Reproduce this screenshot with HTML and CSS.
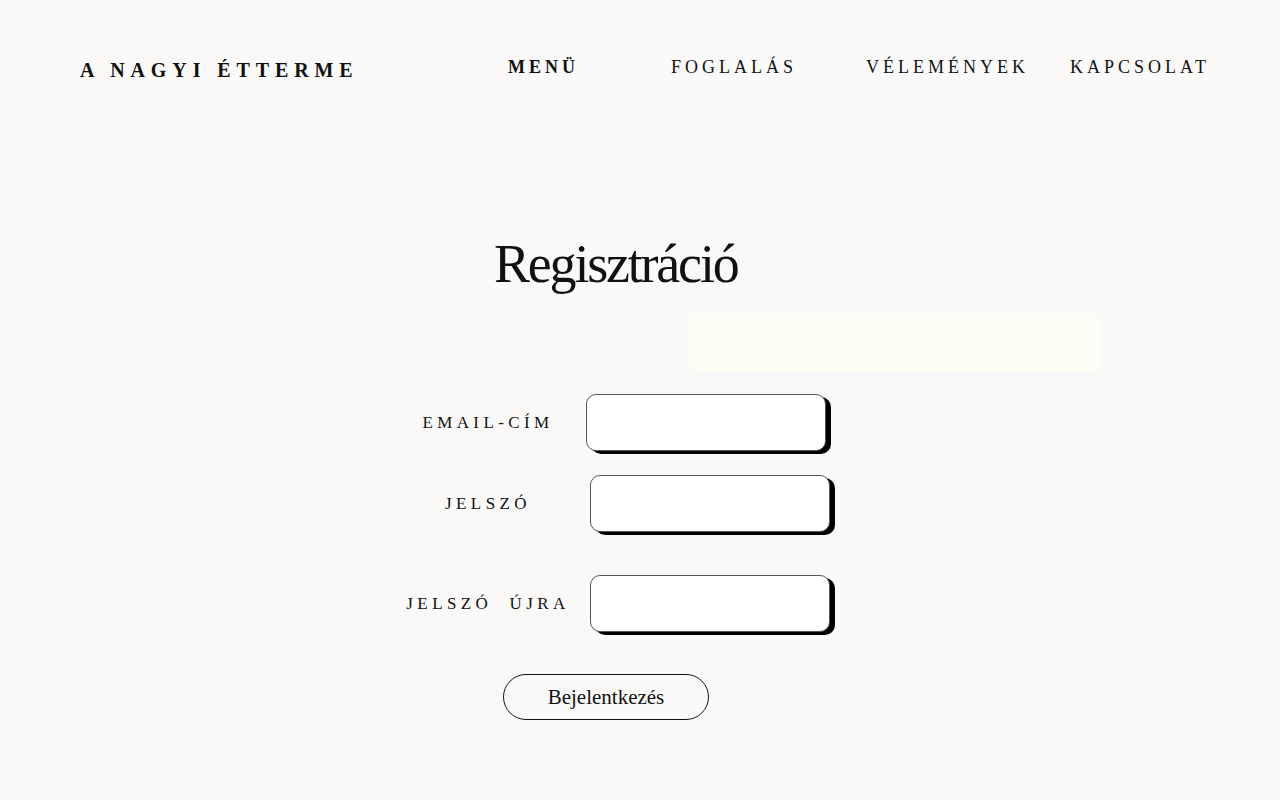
FILE: index.html
```html
<!DOCTYPE html>
<html lang="hu">
<head>
    <meta charset="UTF-8">
    <meta name="viewport" content="width=device-width, initial-scale=1.0">
    <title>Regisztráció - A Nagyi Étterme</title>
    <link rel="stylesheet" href="styles.css">
</head>
<body>
    <header>
        <div class="logo">A NAGYI ÉTTERME</div>
        <nav>
            <a href="#" class="active">MENÜ</a>
            <a href="#">FOGLALA&#769;S</a>
            <a href="#">VE&#769;LEME&#769;NYEK</a>
            <a href="#">KAPCSOLAT</a>
        </nav>
    </header>
    <main>
        <h1>Regisztráció</h1>
        <div class="message"></div>
        <form action="#" method="post">
            <div class="form-row">
                <label for="email">EMAIL-CI&#769;M</label>
                <input type="email" id="email" name="email">
            </div>
            <div class="form-row shifted">
                <label for="password">JELSZÓ</label>
                <input type="password" id="password" name="password">
            </div>
            <div class="form-row shifted spaced">
                <label for="password2">JELSZÓ &nbsp;U&#769;JRA</label>
                <input type="password" id="password2" name="password2">
            </div>
            <button type="submit" class="btn">Bejelentkezés</button>
        </form>
    </main>
</body>
</html>
```

FILE: styles.css
```css
body {
    margin: 0;
    padding: 0;
    background-color: #faf9f7;
    color: #111;
    font-family: 'Liberation Serif', serif;
}
header {
    display: flex;
    align-items: center;
    padding: 52px 70px 0 80px;
}
.logo {
    font-weight: bold;
    font-size: 20px;
    letter-spacing: 5.9px;
    margin-top: 7px;
}
nav {
    margin-left: auto;
    display: grid;
    grid-template-columns: 163px 195px 204px auto;
}
nav a {
    color: #111;
    text-decoration: none;
    font-size: 18px;
    letter-spacing: 4px;
}
nav a.active {
    font-weight: bold;
}
main {
    padding-top: 151px;
}
h1 {
    margin: 0;
    padding-left: 494px;
    font-weight: normal;
    font-size: 54px;
    letter-spacing: -2.2px;
}
.message {
    margin: 19px 0 0 689px;
    width: 412px;
    height: 58px;
    background-color: #fcfcf4;
}
form {
    margin: 22px 0 0 405px;
    width: 440px;
}
.form-row {
    display: grid;
    grid-template-columns: 166px 240px;
    gap: 15px;
    align-items: center;
    margin-bottom: 24px;
}
.form-row.shifted {
    gap: 19px;
}
.form-row.spaced {
    margin-top: 43px;
}
.form-row label {
    text-align: center;
    font-size: 17px;
    letter-spacing: 4.4px;
}
.form-row input {
    box-sizing: border-box;
    width: 240px;
    height: 57px;
    border: 1px solid #555;
    border-radius: 10px;
    background: #fff;
    box-shadow: 5px 3px 0 #000;
    outline: none;
}
.btn {
    margin: 18px 0 0 98px;
    width: 206px;
    height: 46px;
    border: 1px solid #111;
    border-radius: 23px;
    background: transparent;
    font-family: 'Liberation Serif', serif;
    font-size: 21px;
    color: #111;
    cursor: pointer;
}
```
